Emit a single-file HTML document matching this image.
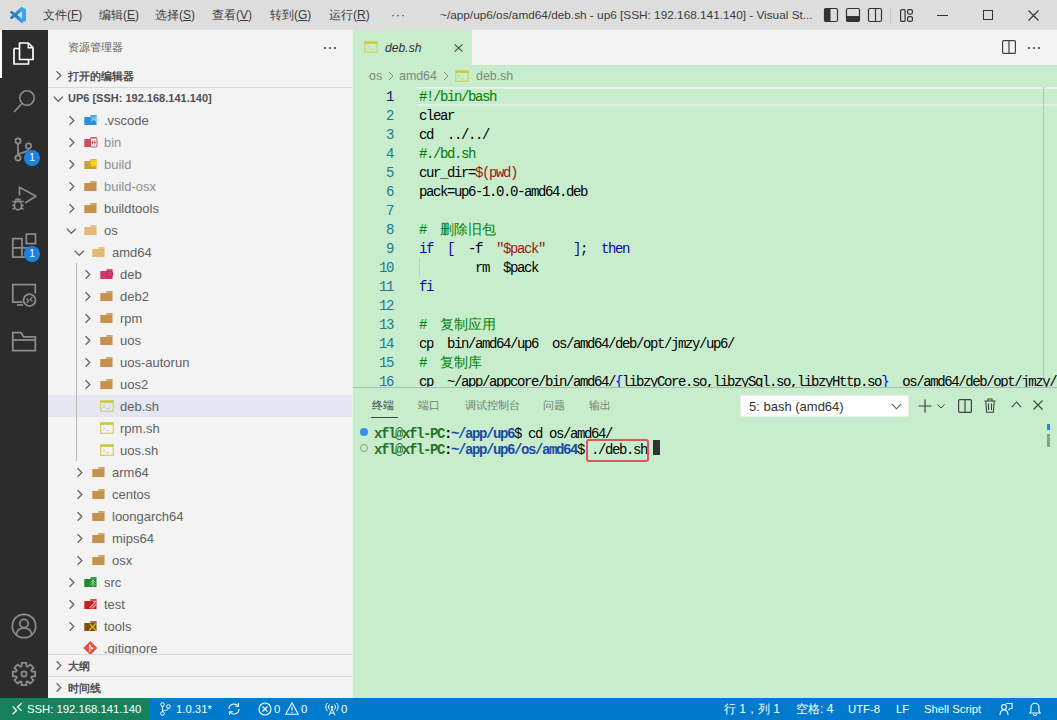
<!DOCTYPE html><html><head><meta charset="utf-8"><style>
*{box-sizing:border-box;margin:0;padding:0}
html,body{width:1057px;height:720px;overflow:hidden;background:#c7edcc;font-family:"Liberation Sans",sans-serif;}
.a{position:absolute}
svg{position:absolute;overflow:visible}
#title{left:0;top:0;width:1057px;height:30px;background:#dddddd;color:#333}
.m{position:absolute;top:0;height:30px;line-height:30px;font-size:12px;color:#3b3b3b;white-space:nowrap}
#act{left:0;top:30px;width:48px;height:668px;background:#2c2c2c}
#side{left:48px;top:30px;width:304px;height:668px;background:#f3f3f3;color:#616161;overflow:hidden}
#editor{left:352px;top:30px;width:705px;height:668px;background:#c7edcc;overflow:hidden}
#status{left:0;top:698px;width:1057px;height:22px;background:#007acc;color:#fff;font-size:12px}
.row{position:absolute;left:0;width:304px;height:22px;line-height:22px;font-size:13px;white-space:nowrap}
.row .t{position:absolute;top:1px}
.code{position:absolute;left:67px;padding-top:1px;font-family:"Liberation Mono",monospace;font-size:14px;letter-spacing:-1.4px;white-space:pre;height:19px;line-height:19px;color:#000}
.ln{position:absolute;left:0;padding-top:1px;width:41px;text-align:right;font-family:"Liberation Mono",monospace;font-size:14px;letter-spacing:-1.4px;color:#237893;height:19px;line-height:19px}
.st{position:absolute;top:0;height:22px;line-height:22px;font-size:11.3px;white-space:nowrap;color:#fff}
</style></head><body><div id="title" class="a"><svg style="left:10px;top:7px" width="16" height="16" viewBox="0 0 100 100"><defs><linearGradient id="lg" x1="0" x2="1" y1="0" y2="0"><stop offset="0" stop-color="#1f78bf"/><stop offset="0.55" stop-color="#2a8fd6"/><stop offset="0.7" stop-color="#35a6ef"/></linearGradient></defs><path fill="url(#lg)" d="M96.46 10.8 75.86.87a6.23 6.23 0 0 0-7.1 1.2L29.35 38.04 12.19 25.01a4.16 4.16 0 0 0-5.32.24l-5.5 5a4.17 4.17 0 0 0 0 6.16L16.26 50 1.37 63.58a4.17 4.17 0 0 0 0 6.16l5.5 5a4.16 4.16 0 0 0 5.32.24l17.16-13.030 39.410 35.96a6.22 6.22 0 0 0 7.1 1.2l20.6-9.92a6.25 6.25 0 0 0 3.54-5.63V16.43a6.25 6.25 0 0 0-3.54-5.630zM75.02 72.7 45.11 50l29.91-22.7z"/></svg><div class="m" style="left:43px">文件(<u>F</u>)</div><div class="m" style="left:99px">编辑(<u>E</u>)</div><div class="m" style="left:155px">选择(<u>S</u>)</div><div class="m" style="left:212px">查看(<u>V</u>)</div><div class="m" style="left:270px">转到(<u>G</u>)</div><div class="m" style="left:329px">运行(<u>R</u>)</div><div class="m" style="left:391px;letter-spacing:1px">···</div><div class="m" style="left:440px;font-size:11.8px">~/app/up6/os/amd64/deb.sh - up6 [SSH: 192.168.141.140] - Visual St...</div><svg style="left:824px;top:8px" width="14" height="14" viewBox="0 0 14 14"><rect x="0.5" y="0.5" width="13" height="13" rx="1.5" fill="none" stroke="#333" stroke-width="1.2"/><rect x="0.5" y="0.5" width="6" height="13" rx="1" fill="#333"/></svg><svg style="left:846px;top:8px" width="14" height="14" viewBox="0 0 14 14"><rect x="0.5" y="0.5" width="13" height="13" rx="1.5" fill="none" stroke="#333" stroke-width="1.2"/><rect x="0.5" y="8" width="13" height="5.5" rx="1" fill="#333"/></svg><svg style="left:868px;top:8px" width="14" height="14" viewBox="0 0 14 14"><rect x="0.5" y="0.5" width="13" height="13" rx="1.5" fill="none" stroke="#333" stroke-width="1.2"/><line x1="7.5" y1="0.5" x2="7.5" y2="13.5" stroke="#333" stroke-width="1.2"/></svg><div class="a" style="left:890px;top:8px;width:1px;height:16px;background:#c4c4c4"></div><svg style="left:900px;top:9px" width="13" height="13" viewBox="0 0 13 13"><rect x="0.6" y="0.6" width="4.5" height="11.8" rx="1" fill="none" stroke="#333" stroke-width="1.2"/><rect x="7.6" y="0.6" width="4.8" height="4.5" rx="1.5" fill="none" stroke="#333" stroke-width="1.2"/><rect x="7.6" y="7.6" width="4.8" height="4.8" rx="1.5" fill="none" stroke="#333" stroke-width="1.2"/></svg><div class="a" style="left:937px;top:15px;width:11px;height:1px;background:#333"></div><div class="a" style="left:983px;top:10px;width:10px;height:10px;border:1px solid #333"></div><svg style="left:1028px;top:10px" width="11" height="11" viewBox="0 0 11 11"><path d="M0.5 0.5L10.5 10.5M10.5 0.5L0.5 10.5" stroke="#333" stroke-width="1.1"/></svg></div><div id="act" class="a"><div class="a" style="left:0;top:0;width:2px;height:48px;background:#fff"></div><svg style="left:12px;top:10px" width="24" height="26" viewBox="0 0 24 26"><path d="M2 8.5h5.5M2 8.5v15.5h14.5v-4.5" fill="none" stroke="#fff" stroke-width="1.7" stroke-linejoin="round"/><path d="M7.5 3h8.8l4.7 4.7v11.8h-13.5z" fill="none" stroke="#fff" stroke-width="1.7" stroke-linejoin="round"/><path d="M16.3 3v4.7h4.7" fill="none" stroke="#fff" stroke-width="1.4"/></svg><svg style="left:12px;top:59px" width="24" height="26" viewBox="0 0 24 26"><circle cx="15" cy="9" r="7.2" fill="none" stroke="#8c8c8c" stroke-width="1.6"/><path d="M10 14.5L2 23" stroke="#8c8c8c" stroke-width="1.8"/></svg><svg style="left:12px;top:106px" width="24" height="26" viewBox="0 0 24 26"><circle cx="6" cy="5" r="2.6" fill="none" stroke="#8c8c8c" stroke-width="1.75"/><circle cx="16.5" cy="10" r="2.6" fill="none" stroke="#8c8c8c" stroke-width="1.75"/><circle cx="6" cy="22" r="2.6" fill="none" stroke="#8c8c8c" stroke-width="1.75"/><path d="M6 7.6v11.8M16.5 12.6c0 5-10.5 3-10.5 6.8" fill="none" stroke="#8c8c8c" stroke-width="1.75"/></svg><div class="a" style="left:24px;top:120px;width:16px;height:16px;border-radius:8px;background:#1a85e0;color:#fff;font-size:10px;line-height:16px;text-align:center">1</div><svg style="left:11px;top:155px" width="26" height="26" viewBox="0 0 26 26"><path d="M8.5 10.5V2.2L25 11.2l-11 6.8" fill="none" stroke="#8c8c8c" stroke-width="1.7" stroke-linejoin="round"/><path d="M1.2 16.5h11.6M1.2 20.5h2.8M10 20.5h2.8M1.5 24.2l2.5-1.2M12.5 24.2L10 23" stroke="#8c8c8c" stroke-width="1.5"/><ellipse cx="7" cy="20.5" rx="3.6" ry="4.3" fill="none" stroke="#8c8c8c" stroke-width="1.7"/><path d="M4.6 15.8c0-2.4 4.8-2.4 4.8 0" fill="none" stroke="#8c8c8c" stroke-width="1.5"/></svg><svg style="left:12px;top:203px" width="24" height="26" viewBox="0 0 24 26"><path d="M0.8 5.5h9.2v9.25h9.25v9.25H0.8zM0.8 14.75h9.2v9.25M14.3 1.2h9.2v9.5h-9.2z" fill="none" stroke="#8c8c8c" stroke-width="1.75" stroke-linejoin="round"/></svg><div class="a" style="left:24px;top:216px;width:16px;height:16px;border-radius:8px;background:#1a85e0;color:#fff;font-size:10px;line-height:16px;text-align:center">1</div><svg style="left:12px;top:252px" width="26" height="26" viewBox="0 0 26 26"><path d="M10.5 20H0.8V2.5h22.5v9" fill="none" stroke="#8c8c8c" stroke-width="1.75"/><path d="M5 23h6" stroke="#8c8c8c" stroke-width="1.75"/><circle cx="17.5" cy="18" r="6" fill="none" stroke="#8c8c8c" stroke-width="1.75"/><path d="M14.5 16.5l2.3 2.2-2.3 2.3M20.5 15l-2.3 2.2 2.3 2.2" fill="none" stroke="#8c8c8c" stroke-width="1.2"/></svg><svg style="left:12px;top:301px" width="24" height="22" viewBox="0 0 24 22"><path d="M0.8 3.5V19.5h22.5V5.8H11.5L9 1.5H0.8z" fill="none" stroke="#8c8c8c" stroke-width="1.75"/><path d="M0.8 9h22.5" stroke="#8c8c8c" stroke-width="1.75"/></svg><svg style="left:11px;top:583px" width="26" height="26" viewBox="0 0 26 26"><circle cx="13" cy="13" r="11.7" fill="none" stroke="#8c8c8c" stroke-width="1.75"/><circle cx="13" cy="10.5" r="4.2" fill="none" stroke="#8c8c8c" stroke-width="1.75"/><path d="M5.5 21.5c0-4 3-6.5 7.5-6.5s7.5 2.5 7.5 6.5" fill="none" stroke="#8c8c8c" stroke-width="1.75"/></svg><svg style="left:11px;top:631px" width="26" height="26" viewBox="0 0 26 26"><polygon points="20.85,10.62 24.23,10.54 24.23,15.46 20.85,15.38 20.23,16.87 22.69,19.20 19.20,22.69 16.87,20.23 15.38,20.85 15.46,24.23 10.54,24.23 10.62,20.85 9.13,20.23 6.80,22.69 3.31,19.20 5.77,16.87 5.15,15.38 1.77,15.46 1.77,10.54 5.15,10.62 5.77,9.13 3.31,6.80 6.80,3.31 9.13,5.77 10.62,5.15 10.54,1.77 15.46,1.77 15.38,5.15 16.87,5.77 19.20,3.31 22.69,6.80 20.23,9.13" fill="none" stroke="#8c8c8c" stroke-width="1.75" stroke-linejoin="round"/><circle cx="13" cy="13" r="2.6" fill="none" stroke="#8c8c8c" stroke-width="1.75"/></svg></div><div id="side" class="a"><div class="a" style="left:20px;top:0;height:35px;line-height:35px;font-size:11px;color:#616161">资源管理器</div><svg style="left:275px;top:16px" width="14" height="4" viewBox="0 0 14 4"><circle cx="2" cy="2" r="1.1" fill="#424242"/><circle cx="7" cy="2" r="1.1" fill="#424242"/><circle cx="12" cy="2" r="1.1" fill="#424242"/></svg><svg style="left:7px;top:40px" width="8" height="11" viewBox="0 0 8 11"><path d="M1.6 1.2L5.8 5.5L1.6 9.8" fill="none" stroke="#646464" stroke-width="1.25"/></svg><div class="a" style="left:20px;top:35px;height:22px;line-height:22px;font-size:11px;font-weight:bold;color:#505050">打开的编辑器</div><div class="a" style="left:0;top:57px;width:304px;height:1px;background:#d8d8d8"></div><svg style="left:5px;top:66px" width="11" height="8" viewBox="0 0 11 8"><path d="M0.8 0.8L5.3 5.3L9.8 0.8" fill="none" stroke="#646464" stroke-width="1.25"/></svg><div class="a" style="left:20px;top:57px;height:22px;line-height:22px;font-size:11px;font-weight:bold;color:#505050">UP6 [SSH: 192.168.141.140]</div><div class="a" style="left:0;top:79px;width:304px;height:545px;overflow:hidden"><div class="row" style="top:0px;"><svg style="left:20px;top:6px" width="8" height="11" viewBox="0 0 8 11"><path d="M1.6 1.2L5.8 5.5L1.6 9.8" fill="none" stroke="#646464" stroke-width="1.25"/></svg><svg style="left:36px;top:5px" width="14" height="12" viewBox="0 0 14 12"><path d="M0.3 3H6.5V1H12.5V11H0.3Z" fill="#2f8fd8"/><rect x="7.2" y="1.6" width="4.6" height="0.9" fill="#ffffff" opacity="0.45"/><path d="M13 1.5l-3.5 2.5-2-1.5-1 0.8 1.6 1.7-1.6 1.7 1 0.8 2-1.5 3.5 2.5z" fill="#7cc4f5"/></svg><span class="t" style="left:56px;color:#616161">.vscode</span></div><div class="row" style="top:22px;"><svg style="left:20px;top:6px" width="8" height="11" viewBox="0 0 8 11"><path d="M1.6 1.2L5.8 5.5L1.6 9.8" fill="none" stroke="#646464" stroke-width="1.25"/></svg><svg style="left:36px;top:5px" width="14" height="12" viewBox="0 0 14 12"><path d="M0.3 3H6.5V1H12.5V11H0.3Z" fill="#d04e5a"/><rect x="7.2" y="1.6" width="4.6" height="0.9" fill="#ffffff" opacity="0.45"/><rect x="6.5" y="2" width="6.5" height="9" rx="1" fill="#f3f3f3" stroke="#c04050" stroke-width="0.9"/><path d="M8.5 4.5v4M10.8 4.5v4M7.8 6.5h3.8" stroke="#c04050" stroke-width="0.8"/></svg><span class="t" style="left:56px;color:#8e8e90">bin</span></div><div class="row" style="top:44px;"><svg style="left:20px;top:6px" width="8" height="11" viewBox="0 0 8 11"><path d="M1.6 1.2L5.8 5.5L1.6 9.8" fill="none" stroke="#646464" stroke-width="1.25"/></svg><svg style="left:36px;top:5px" width="14" height="12" viewBox="0 0 14 12"><path d="M0.3 3H6.5V1H12.5V11H0.3Z" fill="#c9a040"/><rect x="7.2" y="1.6" width="4.6" height="0.9" fill="#ffffff" opacity="0.45"/><circle cx="9.8" cy="5.3" r="3.3" fill="#f6d40e"/></svg><span class="t" style="left:56px;color:#8e8e90">build</span></div><div class="row" style="top:66px;"><svg style="left:20px;top:6px" width="8" height="11" viewBox="0 0 8 11"><path d="M1.6 1.2L5.8 5.5L1.6 9.8" fill="none" stroke="#646464" stroke-width="1.25"/></svg><svg style="left:36px;top:5px" width="14" height="12" viewBox="0 0 14 12"><path d="M0.3 3H6.5V1H12.5V11H0.3Z" fill="#c4924c"/><rect x="7.2" y="1.6" width="4.6" height="0.9" fill="#ffffff" opacity="0.45"/></svg><span class="t" style="left:56px;color:#8e8e90">build-osx</span></div><div class="row" style="top:88px;"><svg style="left:20px;top:6px" width="8" height="11" viewBox="0 0 8 11"><path d="M1.6 1.2L5.8 5.5L1.6 9.8" fill="none" stroke="#646464" stroke-width="1.25"/></svg><svg style="left:36px;top:5px" width="14" height="12" viewBox="0 0 14 12"><path d="M0.3 3H6.5V1H12.5V11H0.3Z" fill="#c4924c"/><rect x="7.2" y="1.6" width="4.6" height="0.9" fill="#ffffff" opacity="0.45"/></svg><span class="t" style="left:56px;color:#616161">buildtools</span></div><div class="row" style="top:110px;"><svg style="left:18px;top:8.5px" width="11" height="8" viewBox="0 0 11 8"><path d="M0.8 0.8L5.3 5.3L9.8 0.8" fill="none" stroke="#646464" stroke-width="1.25"/></svg><svg style="left:36px;top:5px" width="14" height="12" viewBox="0 0 14 12"><path d="M0.3 3H6.5V1H12.5V11H0.3Z" fill="#e2b978"/><rect x="7.2" y="1.6" width="4.6" height="0.9" fill="#ffffff" opacity="0.45"/></svg><span class="t" style="left:56px;color:#616161">os</span></div><div class="row" style="top:132px;"><svg style="left:26px;top:8.5px" width="11" height="8" viewBox="0 0 11 8"><path d="M0.8 0.8L5.3 5.3L9.8 0.8" fill="none" stroke="#646464" stroke-width="1.25"/></svg><svg style="left:44px;top:5px" width="14" height="12" viewBox="0 0 14 12"><path d="M0.3 3H6.5V1H12.5V11H0.3Z" fill="#e2b978"/><rect x="7.2" y="1.6" width="4.6" height="0.9" fill="#ffffff" opacity="0.45"/></svg><span class="t" style="left:64px;color:#616161">amd64</span></div><div class="row" style="top:154px;"><svg style="left:36px;top:6px" width="8" height="11" viewBox="0 0 8 11"><path d="M1.6 1.2L5.8 5.5L1.6 9.8" fill="none" stroke="#646464" stroke-width="1.25"/></svg><svg style="left:52px;top:5px" width="14" height="12" viewBox="0 0 14 12"><path d="M0.3 3H6.5V1H12.5V11H0.3Z" fill="#cf3c6a"/><rect x="7.2" y="1.6" width="4.6" height="0.9" fill="#ffffff" opacity="0.45"/><circle cx="9.5" cy="6" r="3.2" fill="none" stroke="#b02850" stroke-width="1"/></svg><span class="t" style="left:72px;color:#616161">deb</span></div><div class="row" style="top:176px;"><svg style="left:36px;top:6px" width="8" height="11" viewBox="0 0 8 11"><path d="M1.6 1.2L5.8 5.5L1.6 9.8" fill="none" stroke="#646464" stroke-width="1.25"/></svg><svg style="left:52px;top:5px" width="14" height="12" viewBox="0 0 14 12"><path d="M0.3 3H6.5V1H12.5V11H0.3Z" fill="#c4924c"/><rect x="7.2" y="1.6" width="4.6" height="0.9" fill="#ffffff" opacity="0.45"/></svg><span class="t" style="left:72px;color:#616161">deb2</span></div><div class="row" style="top:198px;"><svg style="left:36px;top:6px" width="8" height="11" viewBox="0 0 8 11"><path d="M1.6 1.2L5.8 5.5L1.6 9.8" fill="none" stroke="#646464" stroke-width="1.25"/></svg><svg style="left:52px;top:5px" width="14" height="12" viewBox="0 0 14 12"><path d="M0.3 3H6.5V1H12.5V11H0.3Z" fill="#c4924c"/><rect x="7.2" y="1.6" width="4.6" height="0.9" fill="#ffffff" opacity="0.45"/></svg><span class="t" style="left:72px;color:#616161">rpm</span></div><div class="row" style="top:220px;"><svg style="left:36px;top:6px" width="8" height="11" viewBox="0 0 8 11"><path d="M1.6 1.2L5.8 5.5L1.6 9.8" fill="none" stroke="#646464" stroke-width="1.25"/></svg><svg style="left:52px;top:5px" width="14" height="12" viewBox="0 0 14 12"><path d="M0.3 3H6.5V1H12.5V11H0.3Z" fill="#c4924c"/><rect x="7.2" y="1.6" width="4.6" height="0.9" fill="#ffffff" opacity="0.45"/></svg><span class="t" style="left:72px;color:#616161">uos</span></div><div class="row" style="top:242px;"><svg style="left:36px;top:6px" width="8" height="11" viewBox="0 0 8 11"><path d="M1.6 1.2L5.8 5.5L1.6 9.8" fill="none" stroke="#646464" stroke-width="1.25"/></svg><svg style="left:52px;top:5px" width="14" height="12" viewBox="0 0 14 12"><path d="M0.3 3H6.5V1H12.5V11H0.3Z" fill="#c4924c"/><rect x="7.2" y="1.6" width="4.6" height="0.9" fill="#ffffff" opacity="0.45"/></svg><span class="t" style="left:72px;color:#616161">uos-autorun</span></div><div class="row" style="top:264px;"><svg style="left:36px;top:6px" width="8" height="11" viewBox="0 0 8 11"><path d="M1.6 1.2L5.8 5.5L1.6 9.8" fill="none" stroke="#646464" stroke-width="1.25"/></svg><svg style="left:52px;top:5px" width="14" height="12" viewBox="0 0 14 12"><path d="M0.3 3H6.5V1H12.5V11H0.3Z" fill="#c4924c"/><rect x="7.2" y="1.6" width="4.6" height="0.9" fill="#ffffff" opacity="0.45"/></svg><span class="t" style="left:72px;color:#616161">uos2</span></div><div class="row" style="top:286px;background:#e4e6f1;"><svg style="left:52px;top:5px" width="14" height="12" viewBox="0 0 14 12"><rect x="0.7" y="0.7" width="12.6" height="10.6" fill="none" stroke="#d8d46a" stroke-width="1.4"/><rect x="0.7" y="0.7" width="12.6" height="2.2" fill="#c6cc3e"/><path d="M3 5l2 1.5-2 1.5M6 8.5h3" stroke="#c9c9a0" stroke-width="0.8" fill="none"/></svg><span class="t" style="left:72px;color:#616161">deb.sh</span></div><div class="row" style="top:308px;"><svg style="left:52px;top:5px" width="14" height="12" viewBox="0 0 14 12"><rect x="0.7" y="0.7" width="12.6" height="10.6" fill="none" stroke="#d8d46a" stroke-width="1.4"/><rect x="0.7" y="0.7" width="12.6" height="2.2" fill="#c6cc3e"/><path d="M3 5l2 1.5-2 1.5M6 8.5h3" stroke="#c9c9a0" stroke-width="0.8" fill="none"/></svg><span class="t" style="left:72px;color:#616161">rpm.sh</span></div><div class="row" style="top:330px;"><svg style="left:52px;top:5px" width="14" height="12" viewBox="0 0 14 12"><rect x="0.7" y="0.7" width="12.6" height="10.6" fill="none" stroke="#d8d46a" stroke-width="1.4"/><rect x="0.7" y="0.7" width="12.6" height="2.2" fill="#c6cc3e"/><path d="M3 5l2 1.5-2 1.5M6 8.5h3" stroke="#c9c9a0" stroke-width="0.8" fill="none"/></svg><span class="t" style="left:72px;color:#616161">uos.sh</span></div><div class="row" style="top:352px;"><svg style="left:28px;top:6px" width="8" height="11" viewBox="0 0 8 11"><path d="M1.6 1.2L5.8 5.5L1.6 9.8" fill="none" stroke="#646464" stroke-width="1.25"/></svg><svg style="left:44px;top:5px" width="14" height="12" viewBox="0 0 14 12"><path d="M0.3 3H6.5V1H12.5V11H0.3Z" fill="#c4924c"/><rect x="7.2" y="1.6" width="4.6" height="0.9" fill="#ffffff" opacity="0.45"/></svg><span class="t" style="left:64px;color:#616161">arm64</span></div><div class="row" style="top:374px;"><svg style="left:28px;top:6px" width="8" height="11" viewBox="0 0 8 11"><path d="M1.6 1.2L5.8 5.5L1.6 9.8" fill="none" stroke="#646464" stroke-width="1.25"/></svg><svg style="left:44px;top:5px" width="14" height="12" viewBox="0 0 14 12"><path d="M0.3 3H6.5V1H12.5V11H0.3Z" fill="#c4924c"/><rect x="7.2" y="1.6" width="4.6" height="0.9" fill="#ffffff" opacity="0.45"/></svg><span class="t" style="left:64px;color:#616161">centos</span></div><div class="row" style="top:396px;"><svg style="left:28px;top:6px" width="8" height="11" viewBox="0 0 8 11"><path d="M1.6 1.2L5.8 5.5L1.6 9.8" fill="none" stroke="#646464" stroke-width="1.25"/></svg><svg style="left:44px;top:5px" width="14" height="12" viewBox="0 0 14 12"><path d="M0.3 3H6.5V1H12.5V11H0.3Z" fill="#c4924c"/><rect x="7.2" y="1.6" width="4.6" height="0.9" fill="#ffffff" opacity="0.45"/></svg><span class="t" style="left:64px;color:#616161">loongarch64</span></div><div class="row" style="top:418px;"><svg style="left:28px;top:6px" width="8" height="11" viewBox="0 0 8 11"><path d="M1.6 1.2L5.8 5.5L1.6 9.8" fill="none" stroke="#646464" stroke-width="1.25"/></svg><svg style="left:44px;top:5px" width="14" height="12" viewBox="0 0 14 12"><path d="M0.3 3H6.5V1H12.5V11H0.3Z" fill="#c4924c"/><rect x="7.2" y="1.6" width="4.6" height="0.9" fill="#ffffff" opacity="0.45"/></svg><span class="t" style="left:64px;color:#616161">mips64</span></div><div class="row" style="top:440px;"><svg style="left:28px;top:6px" width="8" height="11" viewBox="0 0 8 11"><path d="M1.6 1.2L5.8 5.5L1.6 9.8" fill="none" stroke="#646464" stroke-width="1.25"/></svg><svg style="left:44px;top:5px" width="14" height="12" viewBox="0 0 14 12"><path d="M0.3 3H6.5V1H12.5V11H0.3Z" fill="#c4924c"/><rect x="7.2" y="1.6" width="4.6" height="0.9" fill="#ffffff" opacity="0.45"/></svg><span class="t" style="left:64px;color:#616161">osx</span></div><div class="row" style="top:462px;"><svg style="left:20px;top:6px" width="8" height="11" viewBox="0 0 8 11"><path d="M1.6 1.2L5.8 5.5L1.6 9.8" fill="none" stroke="#646464" stroke-width="1.25"/></svg><svg style="left:36px;top:5px" width="14" height="12" viewBox="0 0 14 12"><path d="M0.3 3H6.5V1H12.5V11H0.3Z" fill="#1d8a30"/><rect x="7.2" y="1.6" width="4.6" height="0.9" fill="#ffffff" opacity="0.45"/><path d="M9 3.5v7.5M6.5 6.5L9 4l2.5 2.5M6 9.5L9 6.5l3 3" fill="none" stroke="#9ad89a" stroke-width="1"/></svg><span class="t" style="left:56px;color:#616161">src</span></div><div class="row" style="top:484px;"><svg style="left:20px;top:6px" width="8" height="11" viewBox="0 0 8 11"><path d="M1.6 1.2L5.8 5.5L1.6 9.8" fill="none" stroke="#646464" stroke-width="1.25"/></svg><svg style="left:36px;top:5px" width="14" height="12" viewBox="0 0 14 12"><path d="M0.3 3H6.5V1H12.5V11H0.3Z" fill="#c82020"/><rect x="7.2" y="1.6" width="4.6" height="0.9" fill="#ffffff" opacity="0.45"/><path d="M5.5 10l6-6M8 10.5l4-4M9 3.5h3" stroke="#f4a0a0" stroke-width="1.1"/></svg><span class="t" style="left:56px;color:#616161">test</span></div><div class="row" style="top:506px;"><svg style="left:20px;top:6px" width="8" height="11" viewBox="0 0 8 11"><path d="M1.6 1.2L5.8 5.5L1.6 9.8" fill="none" stroke="#646464" stroke-width="1.25"/></svg><svg style="left:36px;top:5px" width="14" height="12" viewBox="0 0 14 12"><path d="M0.3 3H6.5V1H12.5V11H0.3Z" fill="#7c5408"/><rect x="7.2" y="1.6" width="4.6" height="0.9" fill="#ffffff" opacity="0.45"/><path d="M5 10.5l7-7M6 4l6 6.5" stroke="#e0a830" stroke-width="1.3"/></svg><span class="t" style="left:56px;color:#616161">tools</span></div><div class="row" style="top:528px;"><svg style="left:36px;top:5px" width="14" height="12" viewBox="0 0 14 12"><path d="M6.3 -1L13.3 6 6.3 13 -0.7 6z" fill="#e0533a"/><circle cx="5.8" cy="3.5" r="1" fill="#fff"/><circle cx="8.2" cy="6.5" r="1" fill="#fff"/><path d="M5.8 3.5v6.5M5.8 3.5l2.4 3" stroke="#fff" stroke-width="1"/></svg><span class="t" style="left:56px;color:#616161">.gitignore</span></div><div class="a" style="left:28px;top:154px;width:1px;height:198px;background:#b8b8b8"></div></div><div class="a" style="left:0;top:624px;width:304px;height:1px;background:#d8d8d8"></div><svg style="left:7px;top:630px" width="8" height="11" viewBox="0 0 8 11"><path d="M1.6 1.2L5.8 5.5L1.6 9.8" fill="none" stroke="#646464" stroke-width="1.25"/></svg><div class="a" style="left:20px;top:625px;height:22px;line-height:22px;font-size:11px;font-weight:bold;color:#505050">大纲</div><div class="a" style="left:0;top:646px;width:304px;height:1px;background:#d8d8d8"></div><svg style="left:7px;top:652px" width="8" height="11" viewBox="0 0 8 11"><path d="M1.6 1.2L5.8 5.5L1.6 9.8" fill="none" stroke="#646464" stroke-width="1.25"/></svg><div class="a" style="left:20px;top:646.5px;height:22px;line-height:22px;font-size:11px;font-weight:bold;color:#505050">时间线</div></div><div id="editor" class="a"><div class="a" style="left:0;top:0;width:705px;height:35px;background:#f3f3f3"></div><div class="a" style="left:0;top:0;width:120px;height:35px;background:#c7edcc"></div><svg style="left:12px;top:11px" width="14" height="12" viewBox="0 0 14 12"><rect x="0.7" y="0.7" width="12.6" height="10.6" fill="none" stroke="#d8d46a" stroke-width="1.4"/><rect x="0.7" y="0.7" width="12.6" height="2.2" fill="#c6cc3e"/><path d="M3 5l2 1.5-2 1.5M6 8.5h3" stroke="#c9c9a0" stroke-width="0.8" fill="none"/></svg><div class="a" style="left:33px;top:0.5px;height:35px;line-height:35px;font-size:12.2px;font-style:italic;color:#333">deb.sh</div><svg style="left:102px;top:14px" width="9" height="8" viewBox="0 0 9 8"><path d="M0.5 0.3L8.5 7.7M8.5 0.3L0.5 7.7" stroke="#424242" stroke-width="1.05"/></svg><svg style="left:650px;top:10px" width="14" height="14" viewBox="0 0 14 14"><rect x="0.6" y="0.6" width="12.8" height="12.8" rx="1" fill="none" stroke="#424242" stroke-width="1.2"/><path d="M7 0.6v12.8" stroke="#424242" stroke-width="1.2"/></svg><svg style="left:675px;top:16px" width="14" height="4" viewBox="0 0 14 4"><circle cx="2" cy="2" r="1.1" fill="#424242"/><circle cx="7" cy="2" r="1.1" fill="#424242"/><circle cx="12" cy="2" r="1.1" fill="#424242"/></svg><div class="a" style="left:17px;top:35px;height:22px;line-height:22px;font-size:12.4px;color:#7a8a7c">os</div><svg style="left:36px;top:41px" width="6" height="10" viewBox="0 0 6 10"><path d="M1 1L5 5L1 9" fill="none" stroke="#8a8a8a" stroke-width="1"/></svg><div class="a" style="left:47px;top:35px;height:22px;line-height:22px;font-size:12.4px;color:#7a8a7c">amd64</div><svg style="left:91px;top:41px" width="6" height="10" viewBox="0 0 6 10"><path d="M1 1L5 5L1 9" fill="none" stroke="#8a8a8a" stroke-width="1"/></svg><svg style="left:103px;top:40px" width="14" height="12" viewBox="0 0 14 12"><rect x="0.7" y="0.7" width="12.6" height="10.6" fill="none" stroke="#d8d46a" stroke-width="1.4"/><rect x="0.7" y="0.7" width="12.6" height="2.2" fill="#c6cc3e"/><path d="M3 5l2 1.5-2 1.5M6 8.5h3" stroke="#c9c9a0" stroke-width="0.8" fill="none"/></svg><div class="a" style="left:124px;top:35px;height:22px;line-height:22px;font-size:12.4px;color:#7a8a7c">deb.sh</div><div class="a" style="left:65px;top:57px;width:640px;height:19px;border-top:2px solid #e0f3e2;border-bottom:2px solid #e0f3e2"></div><div class="a" style="left:691px;top:57px;width:1px;height:300px;background:#aec5b1"></div><div class="ln" style="top:57px;color:#0b216f">1</div><div class="code" style="top:57px"><span style="color:#008000">#!/bin/bash</span></div><div class="ln" style="top:76px;color:#237893">2</div><div class="code" style="top:76px"><span style="color:#000000">clear</span></div><div class="ln" style="top:95px;color:#237893">3</div><div class="code" style="top:95px"><span style="color:#000000">cd  ../../</span></div><div class="ln" style="top:114px;color:#237893">4</div><div class="code" style="top:114px"><span style="color:#008000">#./bd.sh</span></div><div class="ln" style="top:133px;color:#237893">5</div><div class="code" style="top:133px"><span style="color:#000000">cur_dir=</span><span style="color:#a31515">$(pwd)</span></div><div class="ln" style="top:152px;color:#237893">6</div><div class="code" style="top:152px"><span style="color:#000000">pack=up6-1.0.0-amd64.deb</span></div><div class="ln" style="top:171px;color:#237893">7</div><div class="code" style="top:171px"></div><div class="ln" style="top:190px;color:#237893">8</div><div class="code" style="top:190px"><span style="color:#008000">#  </span><span style="color:#008000"><span style="font-size:14px;letter-spacing:0">删除旧包</span></span></div><div class="ln" style="top:209px;color:#237893">9</div><div class="code" style="top:209px"><span style="color:#0a0aa0">if  [  </span><span style="color:#000000">-f  </span><span style="color:#a31515">&quot;$pack&quot;</span><span style="color:#000000">    </span><span style="color:#0a0aa0">]</span><span style="color:#000000">;  </span><span style="color:#0a0aa0">then</span></div><div class="ln" style="top:228px;color:#237893">10</div><div class="code" style="top:228px"><span style="color:#000000">        rm  $pack</span></div><div class="ln" style="top:247px;color:#237893">11</div><div class="code" style="top:247px"><span style="color:#0a0aa0">fi</span></div><div class="ln" style="top:266px;color:#237893">12</div><div class="code" style="top:266px"></div><div class="ln" style="top:285px;color:#237893">13</div><div class="code" style="top:285px"><span style="color:#008000">#  </span><span style="color:#008000"><span style="font-size:14px;letter-spacing:0">复制应用</span></span></div><div class="ln" style="top:304px;color:#237893">14</div><div class="code" style="top:304px"><span style="color:#000000">cp  bin/amd64/up6  os/amd64/deb/opt/jmzy/up6/</span></div><div class="ln" style="top:323px;color:#237893">15</div><div class="code" style="top:323px"><span style="color:#008000">#  </span><span style="color:#008000"><span style="font-size:14px;letter-spacing:0">复制库</span></span></div><div class="ln" style="top:342px;color:#237893">16</div><div class="code" style="top:342px"><span style="color:#000000">cp  ~/app/appcore/bin/amd64/</span><span style="color:#0000ff">{</span><span style="color:#000000">libzyCore.so,libzySql.so,libzyHttp.so</span><span style="color:#0000ff">}</span><span style="color:#000000">  os/amd64/deb/opt/jmzy/up6/</span></div><div class="a" style="left:67px;top:228px;width:1px;height:19px;background:#b5d3b9"></div><div class="a" style="left:0;top:357px;width:705px;height:311px;background:#c7edcc;border-top:1px solid #a8bfab"></div><div class="a" style="left:20px;top:364px;height:23px;line-height:23px;font-size:11px;color:#424242">终端</div><div class="a" style="left:66px;top:364px;height:23px;line-height:23px;font-size:11px;color:#6f7f71">端口</div><div class="a" style="left:113px;top:364px;height:23px;line-height:23px;font-size:11px;color:#6f7f71">调试控制台</div><div class="a" style="left:191px;top:364px;height:23px;line-height:23px;font-size:11px;color:#6f7f71">问题</div><div class="a" style="left:237px;top:364px;height:23px;line-height:23px;font-size:11px;color:#6f7f71">输出</div><div class="a" style="left:19px;top:387px;width:27px;height:1px;background:#424242"></div><div class="a" style="left:388px;top:365px;width:169px;height:22px;background:#fff;border:1px solid #e8ece8"></div><div class="a" style="left:397px;top:365.5px;height:22px;line-height:22px;font-size:13px;color:#333">5: bash (amd64)</div><svg style="left:539px;top:373px" width="11" height="7" viewBox="0 0 11 7"><path d="M0.8 0.8L5.5 5.8L10.2 0.8" fill="none" stroke="#555" stroke-width="1.1"/></svg><svg style="left:566px;top:369px" width="14" height="14" viewBox="0 0 14 14"><path d="M7 0.5v13M0.5 7h13" stroke="#424242" stroke-width="1.2"/></svg><svg style="left:585px;top:374px" width="8" height="5" viewBox="0 0 8 5"><path d="M0.5 0.5L4 4L7.5 0.5" fill="none" stroke="#424242" stroke-width="1"/></svg><svg style="left:606px;top:369px" width="14" height="14" viewBox="0 0 14 14"><rect x="0.6" y="0.6" width="12.8" height="12.8" rx="1" fill="none" stroke="#424242" stroke-width="1.2"/><path d="M7 0.6v12.8" stroke="#424242" stroke-width="1.2"/></svg><svg style="left:632px;top:368px" width="12" height="15" viewBox="0 0 12 15"><path d="M0.5 3h11M4 3V1h4v2M1.8 3l0.8 11.3h6.8L10.2 3M4.5 5.5v6.5M7.5 5.5v6.5" fill="none" stroke="#424242" stroke-width="1.1"/></svg><svg style="left:659px;top:371px" width="11" height="7" viewBox="0 0 11 7"><path d="M0.8 6.2L5.5 1L10.2 6.2" fill="none" stroke="#424242" stroke-width="1.1"/></svg><svg style="left:681px;top:370px" width="10" height="10" viewBox="0 0 10 10"><path d="M0.5 0.5L9.5 9.5M9.5 0.5L0.5 9.5" stroke="#424242" stroke-width="1.1"/></svg><div class="a" style="left:8px;top:398px;width:8px;height:8px;border-radius:4px;background:#3390ee"></div><div class="a" style="left:8px;top:414px;width:8px;height:8px;border-radius:4px;border:1px solid #8aa08c"></div><div class="code" style="left:22px;top:395px;height:16px;line-height:16px"><span style="color:#2a722a;font-weight:bold;">xfl@xfl-PC</span><span style="color:#000000;font-weight:bold;">:</span><span style="color:#1a4aa8;font-weight:bold;">~/app/up6</span><span style="color:#000000;">$ cd os/amd64/</span></div><div class="code" style="left:22px;top:411px;height:16px;line-height:16px"><span style="color:#2a722a;font-weight:bold;">xfl@xfl-PC</span><span style="color:#000000;font-weight:bold;">:</span><span style="color:#1a4aa8;font-weight:bold;">~/app/up6/os/amd64</span><span style="color:#000000;">$ ./deb.sh</span></div><div class="a" style="left:301px;top:410px;width:7px;height:15px;background:#333"></div><div class="a" style="left:234px;top:409px;width:63px;height:23px;border:2px solid #e0525e;border-radius:3px"></div><div class="a" style="left:695px;top:394px;width:3px;height:6px;background:#1a85ff"></div><div class="a" style="left:695px;top:404px;width:3px;height:13px;background:#8aa08c"></div><div class="a" style="left:0;top:0;width:1px;height:668px;background:#e2f6e5"></div></div><div id="status" class="a"><div class="a" style="left:0;top:0;width:150px;height:22px;background:#16825d"></div><svg style="left:11px;top:4px" width="12" height="14" viewBox="0 0 12 14"><path d="M1.6 4.3L5.7 8.5L1.6 12.3M10.7 1.1L6.5 5.1L10.7 8.9" fill="none" stroke="#fff" stroke-width="1.2"/></svg><div class="st" style="left:27px">SSH: 192.168.141.140</div><svg style="left:160px;top:4px" width="11" height="14" viewBox="0 0 11 14"><circle cx="2.5" cy="2.5" r="1.8" fill="none" stroke="#fff" stroke-width="1"/><circle cx="8.5" cy="4.5" r="1.8" fill="none" stroke="#fff" stroke-width="1"/><circle cx="2.5" cy="11.5" r="1.8" fill="none" stroke="#fff" stroke-width="1"/><path d="M2.5 4.3v5.4M8.5 6.3c0 2.5-6 2-6 3.4" fill="none" stroke="#fff" stroke-width="1"/></svg><div class="st" style="left:176px">1.0.31*</div><svg style="left:227px;top:4px" width="14" height="14" viewBox="0 0 14 14"><path d="M2 7a5 5 0 0 1 9-3M12 7a5 5 0 0 1-9 3M11.5 1v3.3H8.2M2.5 13V9.7h3.3" fill="none" stroke="#fff" stroke-width="1.1"/></svg><svg style="left:258px;top:4px" width="14" height="14" viewBox="0 0 14 14"><circle cx="7" cy="7" r="6" fill="none" stroke="#fff" stroke-width="1.1"/><path d="M4.5 4.5l5 5M9.5 4.5l-5 5" stroke="#fff" stroke-width="1.1"/></svg><div class="st" style="left:274px">0</div><svg style="left:285px;top:4px" width="14" height="13" viewBox="0 0 14 13"><path d="M7 0.8L13.2 12.2H0.8z" fill="none" stroke="#fff" stroke-width="1.1"/><path d="M7 4.5v4M7 9.8v1.2" stroke="#fff" stroke-width="1.1"/></svg><div class="st" style="left:301px">0</div><svg style="left:325px;top:4px" width="14" height="14" viewBox="0 0 14 14"><circle cx="7" cy="5" r="1.3" fill="#fff"/><path d="M4.5 2.5a3.5 3.5 0 0 0 0 5M9.5 2.5a3.5 3.5 0 0 1 0 5M2.5 0.8a6 6 0 0 0 0 8.4M11.5 0.8a6 6 0 0 1 0 8.4M7 6.5L4 13.5M7 6.5l3 7M5 11h4" fill="none" stroke="#fff" stroke-width="1"/></svg><div class="st" style="left:341px">0</div><div class="st" style="left:724px;font-size:12px">行 1，列 1</div><div class="st" style="left:796px;font-size:12px">空格: 4</div><div class="st" style="left:848px">UTF-8</div><div class="st" style="left:896px">LF</div><div class="st" style="left:924px">Shell Script</div><svg style="left:999px;top:4px" width="14" height="14" viewBox="0 0 14 14"><circle cx="5" cy="5" r="2.5" fill="none" stroke="#fff" stroke-width="1.1"/><path d="M1 13c0-3.5 1.8-5 4-5s4 1.5 4 5M7 1.5h6v5h-2l-1.5 1.5" fill="none" stroke="#fff" stroke-width="1.1"/></svg><svg style="left:1029px;top:4px" width="12" height="14" viewBox="0 0 12 14"><path d="M6 1.2c-2.5 0-4 2-4 4.3v3.5L0.8 11h10.4L10 9V5.5C10 3.2 8.5 1.2 6 1.2zM4.3 12.3a1.8 1.8 0 0 0 3.4 0" fill="none" stroke="#fff" stroke-width="1.1"/></svg></div></body></html>
